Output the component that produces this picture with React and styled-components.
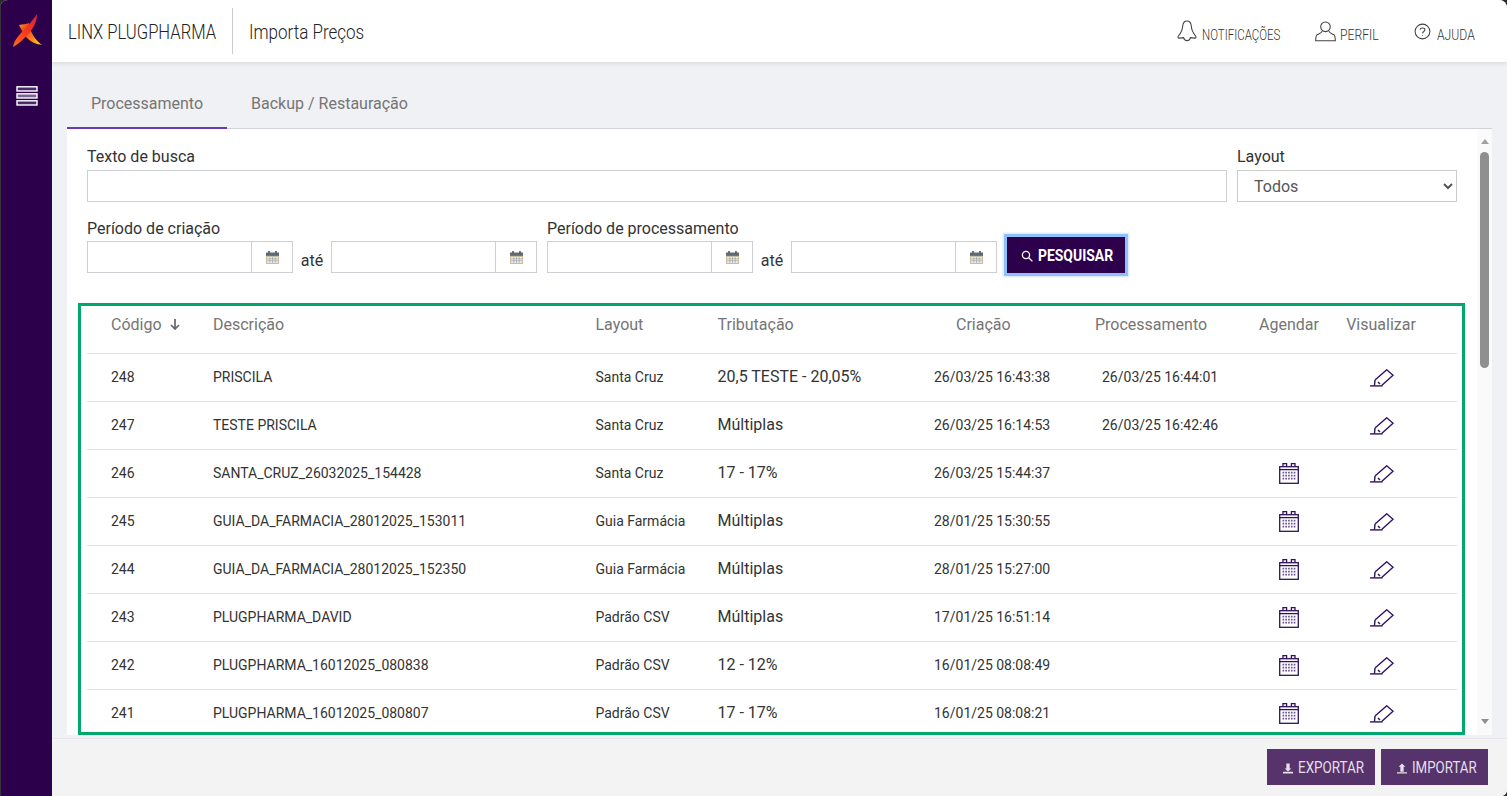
import React from 'react';
import styled, { createGlobalStyle } from 'styled-components';

const Global = createGlobalStyle`
  html, body { margin: 0; padding: 0; height: 100%; overflow: hidden; background: #2b2b2b; }
  #root { height: 100%; }
  * { box-sizing: border-box; }
`;

const Shell = styled.div`
  width: 1507px; height: 796px; display: flex; overflow: hidden;
  border-radius: 8px 8px 6px 0; background: #f0f1f5;
  font-family: Roboto, "Liberation Sans", sans-serif;
`;
const Sidebar = styled.aside`
  width: 52px; flex: none; background: #2d004b; display: flex; flex-direction: column;
  align-items: flex-start; padding: 14px 0 0 11px; gap: 38px;
  border-left: 1px solid #3a3040;
`;
const Main = styled.div`flex: 1; min-width: 0; display: flex; flex-direction: column;`;
const Header = styled.header`
  height: 62px; flex: none; background: #fff; display: flex; align-items: center;
  box-shadow: 0 1px 5px rgba(0,0,0,.12); position: relative; z-index: 2; padding: 0 32px 0 16px;
`;
const Squeezed = styled.span`
  display: inline-block; width: ${p => p.$w}px; white-space: nowrap;
  transform: scaleX(${p => p.$s}); transform-origin: left center;
`;
const Brand = styled(Squeezed)`font-size: 20px; font-weight: 300; color: #222; padding-top: 2px;`;
const Divider = styled.div`width: 1px; height: 46px; background: #ccc; margin-top: -1px;`;
const PageTitle = styled(Squeezed)`font-size: 20px; font-weight: 300; color: #222; margin-left: 16px; padding-top: 2px;`;
const HeaderNav = styled.nav`margin-left: auto; display: flex; align-items: center;`;
const NavItem = styled.div`
  display: flex; align-items: center; gap: ${p => p.$gap}px; margin-left: ${p => p.$ml}px;
`;
const NavLabel = styled(Squeezed)`font-size: 14px; font-weight: 300; color: #333; padding-top: 7px;`;

const Content = styled.div`flex: 1; min-height: 0; padding: 0 15px; display: flex; flex-direction: column;`;
const Tabs = styled.div`height: 67px; flex: none; display: flex; align-items: flex-end; border-bottom: 1px solid #d2d3d9;`;
const Tab = styled.div`
  width: ${p => p.$w}px; height: 49px; display: flex; align-items: center; justify-content: center;
  margin-bottom: -1px; font-size: 16px; color: #757575;
  border-bottom: 2px solid ${p => p.$active ? '#6a3bb0' : 'transparent'};
`;
const PanelRow = styled.div`height: 606px; flex: none; display: flex; background: #fff;`;
const Panel = styled.div`flex: 1; min-width: 0; overflow: hidden; position: relative; padding: 18px 20px 0;`;
const ScrollTrack = styled.div`
  width: 15px; flex: none; background: #fafafb; display: flex; flex-direction: column; align-items: center; padding-top: 10px;
`;
const ArrowUp = styled.div`
  width: 0; height: 0; border-left: 4.5px solid transparent; border-right: 4.5px solid transparent;
  border-bottom: 5px solid #a0a0a0;
`;
const ArrowDn = styled.div`
  width: 0; height: 0; border-left: 4.5px solid transparent; border-right: 4.5px solid transparent;
  border-top: 5px solid #8f8f8f; margin-top: auto; margin-bottom: 11px;
`;
const ScrollThumb = styled.div`width: 9px; height: 216px; margin-top: 8px; background: #8f8f8f; border-radius: 5px;`;
const FilterRow = styled.div`display: flex; align-items: flex-end; gap: 10px;`;
const Field = styled.div`display: flex; flex-direction: column; flex: ${p => p.$w ? 'none' : 1}; width: ${p => p.$w ? p.$w + 'px' : 'auto'};`;
const Label = styled.label`font-size: 16px; color: #333; line-height: 19px; margin-bottom: 3px;`;
const TextInput = styled.input`
  height: 32px; border: 1px solid #ccd0d5; background: #fff; width: 100%; padding: 0 8px; outline: none; display: block; margin-top: 1px;
`;
const Select = styled.select`
  height: 32px; border: 1px solid #ccc; background: #fff; width: 100%; padding: 0 12px; margin-top: 1px;
  font: 16px Roboto, sans-serif; color: #555; outline: none;
`;
const DateRow = styled.div`display: flex; align-items: center;`;
const DateBox = styled.div`width: 206px; height: 32px; display: flex; border: 1px solid #ccd0d5; background: #fff;`;
const DateAddon = styled.div`width: 41px; margin-left: auto; border-left: 1px solid #ccd0d5; display: flex; align-items: center; justify-content: center;`;
const Ate = styled.span`width: 38px; text-align: center; font-size: 16px; color: #333; padding-top: 6px;`;
const DateGroups = styled.div`display: flex; align-items: flex-end; margin-top: 17px;`;
const DateField = styled.div`display: flex; flex-direction: column; width: 460px;`;
const SearchButton = styled.button`
  width: 118px; height: 36px; background: #2d004b; border: 0; color: #fff; font-weight: 700;
  box-shadow: 0 0 0 3px #8fc0fb, 0 0 0 4.5px #e2eeff; display: flex; align-items: center; gap: 5px; padding: 0 0 0 14px;
  font-family: Roboto, sans-serif; font-size: 16px;
`;
const GridWrap = styled.div`margin-top: 27px;`;
const Row = styled.div`
  display: grid; grid-template-columns: 102px 382.5px 122px 216.5px 168px 168px 86px 98px 27px;
  height: ${p => p.$head ? 54 : 48}px; border-bottom: 1px solid #e0e0e0; align-items: ${p => p.$head ? 'start' : 'center'};
  padding-bottom: ${p => p.$head ? 0 : 2}px;
`;
const HeadCell = styled.div`
  font-size: 16px; color: #757575; padding-left: ${p => p.$pl ?? 24}px; height: 48px; display: flex; align-items: center; gap: 8px; white-space: nowrap;
  ${p => p.$center ? 'padding-left: 0; justify-content: center;' : ''}
`;
const Cell = styled.div`
  font-size: ${p => p.$big ? 16 : 14}px; color: #333; padding-left: 24px; white-space: nowrap;
`;
const IconCell = styled.div`display: flex; justify-content: center; padding-top: 2px;`;
const Highlight = styled.div`
  position: absolute; left: 11px; top: 174px; width: 1387px; height: 432px; border: 3px solid #00a86b; pointer-events: none;
`;
const Footer = styled.footer`
  flex: 1; margin: 3px -15px 0; background: #f3f3f3; border-top: 1px solid #e6e6ea; display: flex; justify-content: flex-end; align-items: flex-start;
  gap: 6px; padding: 10px 19px 0 0;
`;
const ActionButton = styled.button`
  width: ${p => p.$w}px; height: 36px; background: #56346b; color: #e4dfe9; border: 0; display: flex; align-items: center; gap: ${p => p.$gap}px; padding: 0 0 0 16px;
  font-family: Roboto, sans-serif; font-size: 16px;
`;
const MenuSvg = styled.svg`margin-left: 4px;`;
const SearchSvg = styled.svg`margin-top: 2px;`;
const ActionSvg = styled.svg`margin-top: 3px;`;
const PencilSvg = styled.svg`margin-left: 1px;`;

const Logo = () => (
  <svg width="30" height="34" viewBox="0 0 30 34">
    <defs>
      <linearGradient id="lg1" x1="0" y1="1" x2="1" y2="0">
        <stop offset="0" stopColor="#ff6a1c" /><stop offset="0.55" stopColor="#f4361e" /><stop offset="1" stopColor="#d8203f" />
      </linearGradient>
      <linearGradient id="lg2" x1="0" y1="0" x2="1" y2="0.7">
        <stop offset="0" stopColor="#ffa51a" /><stop offset="0.35" stopColor="#f2361f" /><stop offset="1" stopColor="#ffc41a" />
      </linearGradient>
    </defs>
    <path d="M7 11 C11 10.5 14 10 17 9 L19 17 C22 24 26 28 30 31 C25 30 20 29 15 24 C12 21 9 15 7 11Z" fill="url(#lg2)" />
    <path d="M25 0 C25 7 22 13 18 18 C13 24 7 30 1 33 C2 27 6 22 10 18 C16 12 21 6 25 0Z" fill="url(#lg1)" />
  </svg>
);
const MenuIcon = () => (
  <MenuSvg width="22" height="20" viewBox="0 0 22 20" stroke="#fff" strokeWidth="1.4">
    <rect x="1" y="0.8" width="20" height="4.2" fill="#4b2a6b" />
    <rect x="1" y="7.8" width="20" height="4.2" fill="#7b6298" />
    <rect x="1" y="14.8" width="20" height="4.2" fill="#4b2a6b" />
  </MenuSvg>
);
const Bell = () => (
  <svg width="20" height="23" viewBox="0 0 20 23" fill="none" stroke="#444" strokeWidth="1.1">
    <path d="M10 1 C7.5 1 6 3.2 5.7 6 C5.4 10 4.5 12.5 1.4 16 C0.6 17 1 18.2 2.2 18.1 L6.6 17.6 C7.5 21.6 12.5 21.6 13.4 17.6 L17.8 18.1 C19 18.2 19.4 17 18.6 16 C15.5 12.5 14.6 10 14.3 6 C14 3.2 12.5 1 10 1Z" />
  </svg>
);
const User = () => (
  <svg width="21" height="21" viewBox="0 0 21 21" fill="none" stroke="#444" strokeWidth="1.1">
    <circle cx="10.5" cy="5.8" r="4.8" />
    <path d="M7.2 10 C6.8 12 4 12.6 2.2 13.6 C1 14.4 .7 16 .7 19.8 H20.3 C20.3 16 20 14.4 18.8 13.6 C17 12.6 14.2 12 13.8 10" />
  </svg>
);
const Help = () => (
  <svg width="17" height="17" viewBox="0 0 18 18" fill="none" stroke="#444" strokeWidth="1.1">
    <circle cx="9" cy="9" r="7.8" />
    <path d="M6.4 7 C6.6 4.6 11.6 4.6 11.6 7.2 C11.6 9 9.2 9 9 11" />
    <path d="M9 12.6 V13.6" />
  </svg>
);
const SmallCal = () => (
  <svg width="13" height="13" viewBox="0 0 12 12">
    <rect x="0" y="1.5" width="12" height="10.5" fill="#c9bf9f" />
    <rect x="0" y="1.5" width="12" height="3" fill="#5d6c7a" />
    <rect x="1" y="5.5" width="10" height="5.5" fill="#f4eedb" />
    <path d="M1 7.2h10M1 9h10M3.5 5.5v5.5M6 5.5v5.5M8.5 5.5v5.5" stroke="#8fa3b5" strokeWidth=".6" />
    <rect x="2" y="0" width="1.6" height="3" fill="#6a5f55" /><rect x="8.4" y="0" width="1.6" height="3" fill="#6a5f55" />
  </svg>
);
const Calendar = () => (
  <svg width="20" height="21" viewBox="0 0 20 21" fill="none" stroke="#2f1260" strokeWidth="1.3">
    <rect x=".7" y="3.7" width="18.6" height="16.6" />
    <path d="M.7 6.6 H19.3" />
    <path d="M4 3.7 V.7 H7.6 V3.7 M12.4 3.7 V.7 H16 V3.7" />
    <path d="M3.5 9.6h13M3.5 12.6h13M3.5 15.6h13" stroke="#6d5a97" strokeWidth="1.6" strokeDasharray="1.7 1.1" />
  </svg>
);
const Pencil = () => (
  <PencilSvg width="24" height="18" viewBox="0 0 24 18" fill="none" stroke="#2f1260" strokeWidth="1.4">
    <path d="M5 11 L16.7 .8 L23 6.3 L11.7 16.5" />
    <path d="M5 11 L4.5 16.5" />
    <path d="M8 13 L10 15" />
    <path d="M0 16.9 H12.5" />
  </PencilSvg>
);
const SearchIcon = () => (
  <SearchSvg width="12" height="12" viewBox="0 0 12 12" fill="none" stroke="#fff" strokeWidth="1.3">
    <circle cx="5" cy="5" r="3.6" /><path d="M7.8 7.8 L11.4 11.4" />
  </SearchSvg>
);
const ArrowDown = () => (
  <svg width="10" height="11" viewBox="0 0 10 11" fill="none" stroke="#666" strokeWidth="1.7">
    <path d="M5 0 V10 M1 6 L5 10 L9 6" />
  </svg>
);
const Exp = () => (
  <ActionSvg width="10" height="11" viewBox="0 0 12 12" fill="#e4dfe9"><path d="M4 0h4v6h2L6 9.5 2 6h2zM0 10h12v2H0z" /></ActionSvg>
);
const Imp = () => (
  <ActionSvg width="10" height="11" viewBox="0 0 12 12" fill="#e4dfe9"><path d="M6 0l4 4H8v6H4V4H2zM0 10.5h12V12H0z" /></ActionSvg>
);

const rows = [
  ['248', 'PRISCILA', 'Santa Cruz', '20,5 TESTE - 20,05%', '26/03/25 16:43:38', '26/03/25 16:44:01', false],
  ['247', 'TESTE PRISCILA', 'Santa Cruz', 'Múltiplas', '26/03/25 16:14:53', '26/03/25 16:42:46', false],
  ['246', 'SANTA_CRUZ_26032025_154428', 'Santa Cruz', '17 - 17%', '26/03/25 15:44:37', '', true],
  ['245', 'GUIA_DA_FARMACIA_28012025_153011', 'Guia Farmácia', 'Múltiplas', '28/01/25 15:30:55', '', true],
  ['244', 'GUIA_DA_FARMACIA_28012025_152350', 'Guia Farmácia', 'Múltiplas', '28/01/25 15:27:00', '', true],
  ['243', 'PLUGPHARMA_DAVID', 'Padrão CSV', 'Múltiplas', '17/01/25 16:51:14', '', true],
  ['242', 'PLUGPHARMA_16012025_080838', 'Padrão CSV', '12 - 12%', '16/01/25 08:08:49', '', true],
  ['241', 'PLUGPHARMA_16012025_080807', 'Padrão CSV', '17 - 17%', '16/01/25 08:08:21', '', true],
];

const DateInput = () => (
  <DateBox><DateAddon><SmallCal /></DateAddon></DateBox>
);
const DatePair = ({ label }) => (
  <DateField>
    <Label>{label}</Label>
    <DateRow><DateInput /><Ate>até</Ate><DateInput /></DateRow>
  </DateField>
);

export default function App() {
  return (
    <Shell>
      <Global />
      <Sidebar><Logo /><MenuIcon /></Sidebar>
      <Main>
        <Header>
          <Brand $w={164} $s={0.83}>LINX PLUGPHARMA</Brand>
          <Divider />
          <PageTitle $w={120} $s={0.85}>Importa Preços</PageTitle>
          <HeaderNav>
            <NavItem $gap={5} $ml={0}><Bell /><NavLabel $w={79} $s={0.82}>NOTIFICAÇÕES</NavLabel></NavItem>
            <NavItem $gap={4} $ml={34}><User /><NavLabel $w={38} $s={0.87}>PERFIL</NavLabel></NavItem>
            <NavItem $gap={6} $ml={36}><Help /><NavLabel $w={38} $s={0.87}>AJUDA</NavLabel></NavItem>
          </HeaderNav>
        </Header>
        <Content>
          <Tabs>
            <Tab $w={160} $active>Processamento</Tab>
            <Tab $w={205}>Backup / Restauração</Tab>
          </Tabs>
          <PanelRow>
            <Panel>
              <FilterRow>
                <Field><Label>Texto de busca</Label><TextInput /></Field>
                <Field $w={220}>
                  <Label>Layout</Label>
                  <Select defaultValue="Todos"><option>Todos</option></Select>
                </Field>
              </FilterRow>
              <DateGroups>
                <DatePair label="Período de criação" />
                <DatePair label="Período de processamento" />
                <SearchButton><SearchIcon /><Squeezed $w={75} $s={0.87}>PESQUISAR</Squeezed></SearchButton>
              </DateGroups>
              <GridWrap>
                <Row $head>
                  <HeadCell>Código <ArrowDown /></HeadCell>
                  <HeadCell>Descrição</HeadCell>
                  <HeadCell>Layout</HeadCell>
                  <HeadCell>Tributação</HeadCell>
                  <HeadCell $pl={46}>Criação</HeadCell>
                  <HeadCell $pl={17}>Processamento</HeadCell>
                  <HeadCell $center>Agendar</HeadCell>
                  <HeadCell $center>Visualizar</HeadCell>
                </Row>
                {rows.map(r => (
                  <Row key={r[0]}>
                    <Cell>{r[0]}</Cell>
                    <Cell>{r[1]}</Cell>
                    <Cell>{r[2]}</Cell>
                    <Cell $big>{r[3]}</Cell>
                    <Cell>{r[4]}</Cell>
                    <Cell>{r[5]}</Cell>
                    <IconCell>{r[6] && <Calendar />}</IconCell>
                    <IconCell><Pencil /></IconCell>
                  </Row>
                ))}
              </GridWrap>
              <Highlight />
            </Panel>
            <ScrollTrack>
              <ArrowUp />
              <ScrollThumb />
              <ArrowDn />
            </ScrollTrack>
          </PanelRow>
          <Footer>
            <ActionButton $w={108} $gap={5}><Exp /><Squeezed $w={66} $s={0.84}>EXPORTAR</Squeezed></ActionButton>
            <ActionButton $w={107} $gap={5}><Imp /><Squeezed $w={64} $s={0.83}>IMPORTAR</Squeezed></ActionButton>
          </Footer>
        </Content>
      </Main>
    </Shell>
  );
}
